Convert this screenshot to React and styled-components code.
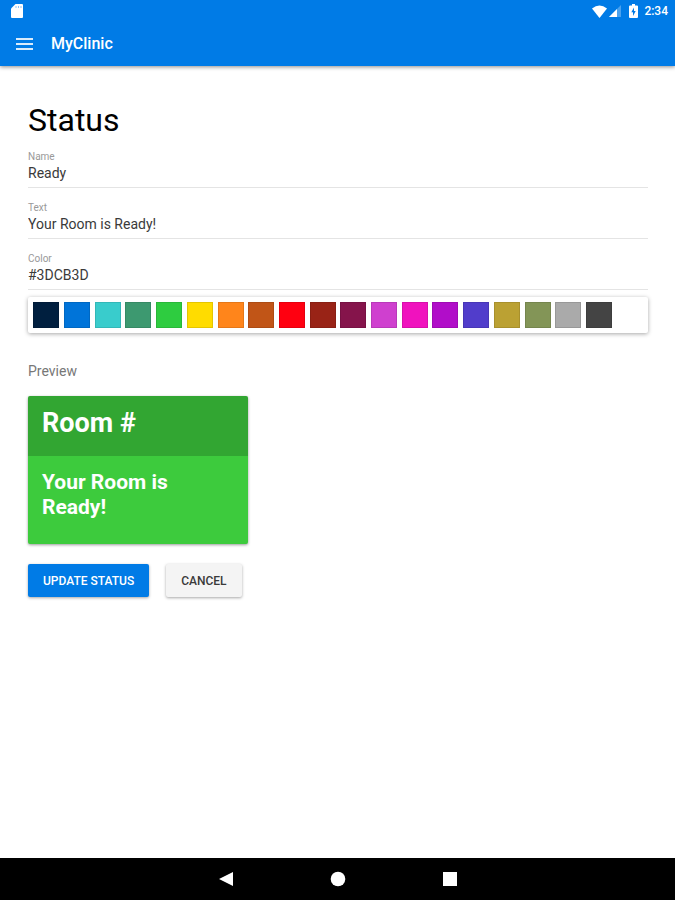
import React, { useState } from "react"
import styled, { createGlobalStyle, ThemeProvider } from "styled-components"

const theme = {
    colors: {
        primary: "#007be6",
        font: {
            dark: "#000000",
            value: "#3a3a3a",
            label: "#999999",
            preview: "#777777",
            light: "#ffffff",
        },
        line: "#e4e4e4",
        button: "#f4f4f4",
    },
}

const swatches = [
    { name: "Navy", value: "#001F3F" },
    { name: "Blue", value: "#0074D9" },
    { name: "Aqua", value: "#39CCCC" },
    { name: "Teal", value: "#3D9970" },
    { name: "Green", value: "#2ECC40" },
    { name: "Yellow", value: "#FFDC00" },
    { name: "Orange", value: "#FF851B" },
    { name: "Rust", value: "#C15517" },
    { name: "Red", value: "#FF0010" },
    { name: "Brick", value: "#992316" },
    { name: "Maroon", value: "#85144B" },
    { name: "Orchid", value: "#CF40CF" },
    { name: "Fuchsia", value: "#F012BE" },
    { name: "Purple", value: "#B10DC9" },
    { name: "Indigo", value: "#513DCB" },
    { name: "Gold", value: "#BBA133" },
    { name: "Olive", value: "#839557" },
    { name: "Silver", value: "#AAAAAA" },
    { name: "Charcoal", value: "#444444" },
]

const GlobalStyle = createGlobalStyle`
    body {
        margin: 0;
        background: #ffffff;
        font-family: Roboto, "Liberation Sans", sans-serif;
    }

    *, *::before, *::after {
        box-sizing: border-box;
    }

    button, input {
        font-family: inherit;
    }
`

const Screen = styled.div`
    display: flex;
    flex-direction: column;
    min-height: 100vh;
`

const Header = styled.header`
    background: ${(props) => props.theme.colors.primary};
    color: ${(props) => props.theme.colors.font.light};
    box-shadow: 0 1px 4px rgba(0, 0, 0, 0.45);
`

const StatusBar = styled.div`
    display: flex;
    align-items: center;
    justify-content: space-between;
    height: 22px;
    padding: 0 7px 0 11px;

    svg {
        display: block;
    }
`

const StatusIcons = styled.div`
    display: flex;
    align-items: center;
    font-size: 12px;
    line-height: 22px;
    font-weight: 500;

    .signal {
        margin: 0 8px 0 2px;
    }

    .battery {
        margin-right: 6px;
    }
`

const Toolbar = styled.div`
    display: flex;
    align-items: center;
    gap: 18px;
    height: 44px;
    padding: 0 16px;

    h1 {
        margin: 0;
        font-size: 16px;
        line-height: 20px;
        font-weight: 500;
    }
`

const MenuButton = styled.button`
    display: flex;
    padding: 0;
    border: 0;
    background: none;
    color: inherit;
    opacity: 0.85;
`

const Content = styled.main`
    flex: 1;
    padding: 34px 27px 34px 28px;
`

const Title = styled.h2`
    margin: 0 0 10px;
    color: ${(props) => props.theme.colors.font.dark};
    font-size: 32px;
    line-height: 40px;
    font-weight: 400;
`

const FieldList = styled.div`
    display: flex;
    flex-direction: column;
    gap: 13px;
`

const StyledField = styled.div`
    display: flex;
    flex-direction: column;
    border-bottom: 1px solid ${(props) => props.theme.colors.line};
    padding-bottom: 5px;

    label {
        color: ${(props) => props.theme.colors.font.label};
        font-size: 10px;
        line-height: 14px;
    }

    input {
        width: 100%;
        height: 18px;
        padding: 0;
        border: 0;
        outline: 0;
        background: none;
        color: ${(props) => props.theme.colors.font.value};
        font-size: 14px;
        line-height: 18px;
    }
`

const Palette = styled.div`
    display: grid;
    grid-template-columns: repeat(20, 1fr);
    justify-items: center;
    margin-top: 7px;
    padding: 5px 3px;
    border-radius: 2px;
    box-shadow: 0 1px 4px rgba(0, 0, 0, 0.35);
`

const Swatch = styled.button`
    width: 26px;
    height: 26px;
    padding: 0;
    border: 1px solid rgba(0, 0, 0, 0.1);
    background: ${(props) => props.$color};
`

const PreviewLabel = styled.div`
    margin: 28px 0 15px;
    color: ${(props) => props.theme.colors.font.preview};
    font-size: 14px;
    line-height: 20px;
`

const PreviewCard = styled.section`
    width: 220px;
    min-height: 148px;
    overflow: hidden;
    border-radius: 2px;
    background: ${(props) => props.$color};
    color: ${(props) => props.theme.colors.font.light};
    box-shadow: 0 1px 3px rgba(0, 0, 0, 0.4);

    h3 {
        margin: 0;
        padding: 12px 14px 18px;
        background: rgba(0, 0, 0, 0.18);
        font-size: 27px;
        line-height: 30px;
        font-weight: 700;
    }

    p {
        margin: 0;
        padding: 14px;
        font-size: 21px;
        line-height: 25px;
        font-weight: 700;
    }
`

const Actions = styled.div`
    display: flex;
    gap: 17px;
    margin-top: 20px;
`

const ActionButton = styled.button`
    height: 33px;
    padding: 0 15px;
    border: 0;
    border-radius: 2px;
    background: ${(props) => props.$primary ? props.theme.colors.primary : props.theme.colors.button};
    color: ${(props) => props.$primary ? props.theme.colors.font.light : props.theme.colors.font.value};
    box-shadow: 0 1px 3px rgba(0, 0, 0, 0.35);
    font-size: 12px;
    line-height: 16px;
    font-weight: 500;
    text-transform: uppercase;
`

const NavBar = styled.nav`
    display: flex;
    align-items: center;
    justify-content: center;
    gap: 96px;
    height: 42px;
    background: #000000;

    button {
        display: flex;
        padding: 0;
        border: 0;
        background: none;
    }
`

const Field = ({ id, label, value, onChange }) => (
    <StyledField>
        <label htmlFor={id}>{label}</label>
        <input id={id} type="text" value={value} onChange={(e) => onChange(e.target.value)} />
    </StyledField>
)

const App = () => {
    const [name, setName] = useState("Ready")
    const [text, setText] = useState("Your Room is Ready!")
    const [color, setColor] = useState("#3DCB3D")

    return (
        <ThemeProvider theme={theme}>
            <GlobalStyle />
            <Screen>
                <Header>
                    <StatusBar>
                        <svg width="12" height="14" viewBox="0 0 12 14" aria-hidden="true">
                            <path d="M4.5 0H11q1 0 1 1v12q0 1-1 1H1q-1 0-1-1V4.500z" fill="#fff" />
                            <path d="M5 2v2M7.500 2v2M10 2v2" stroke="#8ec3f5" strokeWidth="1" />
                        </svg>
                        <StatusIcons>
                            <svg width="15" height="13" viewBox="0 0 15 13" aria-hidden="true">
                                <path d="M0 3.500Q7.500-2.500 15 3.500L7.500 13z" fill="#fff" />
                            </svg>
                            <svg className="signal" width="12" height="12" viewBox="0 0 12 12" aria-hidden="true">
                                <path d="M12 0v12H0z" fill="#4aa1ee" />
                                <path d="M8 4v8H0z" fill="#fff" />
                            </svg>
                            <svg className="battery" width="9" height="14" viewBox="0 0 9 14" aria-hidden="true">
                                <path d="M3 0h3v1.500h2q1 0 1 1V13q0 1-1 1H1q-1 0-1-1V2.500q0-1 1-1h2z" fill="#fff" />
                                <path d="M5 3.500L2.300 8.200H4V12l2.700-5H5z" fill="#007be6" />
                            </svg>
                            <span>2:34</span>
                        </StatusIcons>
                    </StatusBar>
                    <Toolbar>
                        <MenuButton type="button" aria-label="Menu">
                            <svg width="17" height="12" viewBox="0 0 17 12">
                                <path d="M0 1h17M0 6h17M0 11h17" stroke="currentColor" strokeWidth="2" />
                            </svg>
                        </MenuButton>
                        <h1>MyClinic</h1>
                    </Toolbar>
                </Header>
                <Content>
                    <Title>Status</Title>
                    <FieldList>
                        <Field id="status-name" label="Name" value={name} onChange={setName} />
                        <Field id="status-text" label="Text" value={text} onChange={setText} />
                        <Field id="status-color" label="Color" value={color} onChange={setColor} />
                    </FieldList>
                    <Palette>
                        {swatches.map((item) => (
                            <Swatch
                                key={item.value}
                                type="button"
                                aria-label={item.name}
                                $color={item.value}
                                onClick={() => setColor(item.value)}
                            />
                        ))}
                    </Palette>
                    <PreviewLabel>Preview</PreviewLabel>
                    <PreviewCard $color={color}>
                        <h3>Room #</h3>
                        <p>{text}</p>
                    </PreviewCard>
                    <Actions>
                        <ActionButton type="button" $primary>Update Status</ActionButton>
                        <ActionButton type="button">Cancel</ActionButton>
                    </Actions>
                </Content>
                <NavBar>
                    <button type="button" aria-label="Back">
                        <svg width="16" height="16" viewBox="0 0 16 16">
                            <path d="M15 1v14L1 8z" fill="#fff" />
                        </svg>
                    </button>
                    <button type="button" aria-label="Home">
                        <svg width="16" height="16" viewBox="0 0 16 16">
                            <circle cx="8" cy="8" r="7.300" fill="#fff" />
                        </svg>
                    </button>
                    <button type="button" aria-label="Recent apps">
                        <svg width="16" height="16" viewBox="0 0 16 16">
                            <rect x="1" y="1" width="14" height="14" fill="#fff" />
                        </svg>
                    </button>
                </NavBar>
            </Screen>
        </ThemeProvider>
    )
}

export default App
